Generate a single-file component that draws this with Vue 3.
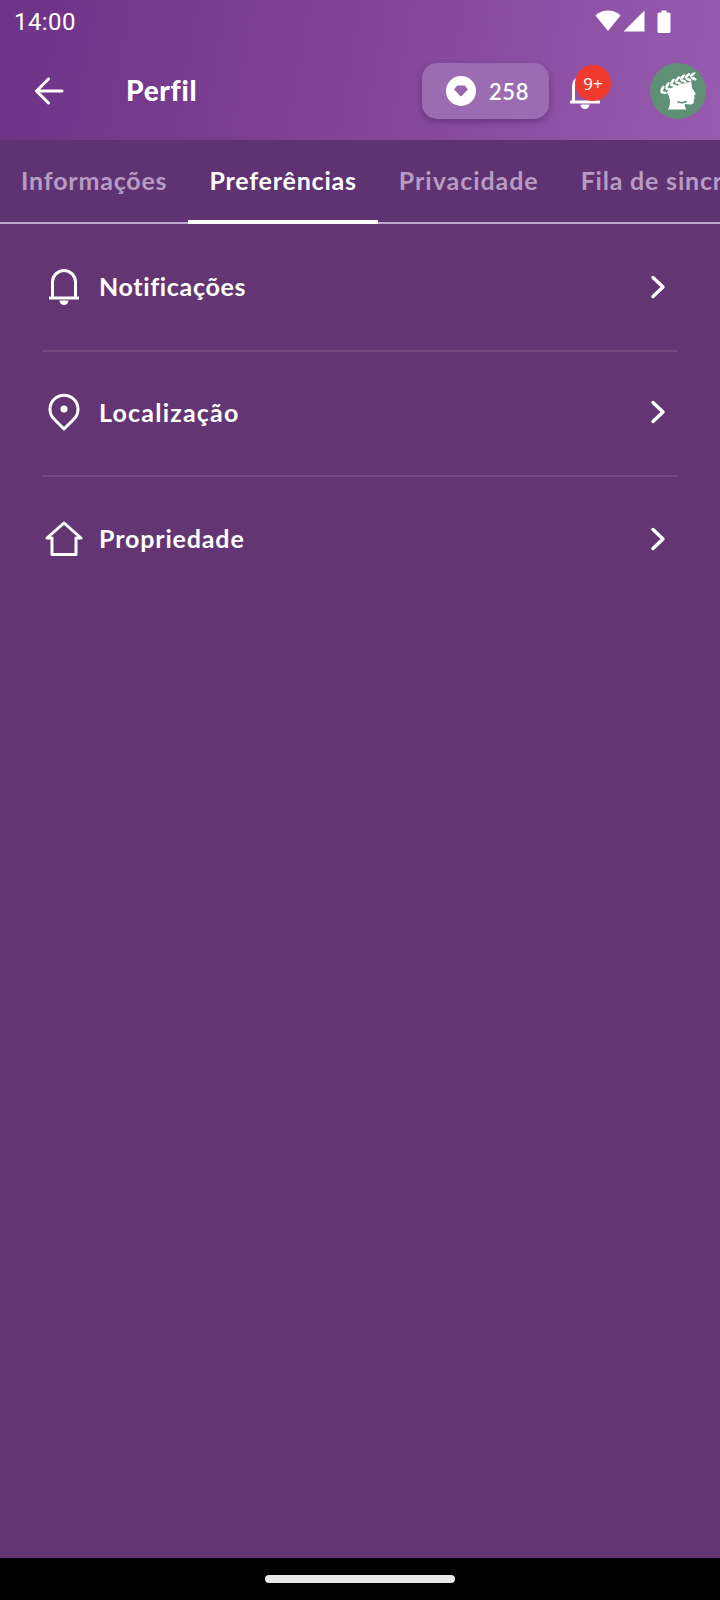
<script setup>
const tabs = [
  { label: 'Informações' },
  { label: 'Preferências', active: true },
  { label: 'Privacidade' },
  { label: 'Fila de sincronização' }
]
const rows = [
  { label: 'Notificações', icon: 'bell' },
  { label: 'Localização', icon: 'pin' },
  { label: 'Propriedade', icon: 'home' }
]
const spine = [
  [11, 28, -62, 12],
  [16, 24.5, -60, 12],
  [21, 21, -55, 14],
  [26, 18.5, -50, 16],
  [31, 16.5, -45, 20],
  [36, 15, -40, 24],
  [41, 14, -35, 28]
]
</script>

<template>
  <div class="screen">
    <header class="top">
      <div class="status">
        <span class="time">14:00</span>
        <div class="status-icons">
          <svg width="26" height="22" viewBox="0 0 26 22"><path d="M0.5 5.500C4 2.300 8.300 0.500 13 0.500s9 1.800 12.500 5L13 21z" fill="#fff"/></svg>
          <svg width="22" height="22" viewBox="0 0 22 22"><path d="M21.500 0.500V21.500H0.500z" fill="#fff"/></svg>
          <svg width="14" height="23" viewBox="0 0 14 23"><path d="M4.500 0.500h5v2h2.500a1.500 1.500 0 0 1 1.500 1.500v17.500a1.500 1.500 0 0 1-1.500 1.500h-10a1.500 1.500 0 0 1-1.500-1.500v-17.500a1.500 1.500 0 0 1 1.500-1.500h2.500z" fill="#fff"/></svg>
        </div>
      </div>
      <div class="toolbar">
        <svg class="back" width="30" height="28" viewBox="0 0 30 28" fill="none" stroke="#fff" stroke-width="3" stroke-linecap="round" stroke-linejoin="round"><path d="M28 14H3M14.500 2L2.500 14l12 12"/></svg>
        <h1 class="title">Perfil</h1>
        <div class="chip">
          <span class="gem">
            <svg width="14" height="12" viewBox="0 0 14 12"><path d="M3.500 0.500h7a1 1 0 0 1 .8.400l2.200 3a1 1 0 0 1-.1 1.200L7.700 11a1 1 0 0 1-1.400 0L.6 5.100a1 1 0 0 1-.1-1.200l2.200-3a1 1 0 0 1 .8-.400z" fill="#9767ad"/></svg>
          </span>
          <span class="chip-num">258</span>
        </div>
        <div class="bell-wrap">
          <svg width="30" height="37" viewBox="0 0 30 37" fill="none"><path d="M3.500 28.500V14a11.500 11.500 0 0 1 23 0v14.500" stroke="#fff" stroke-width="3"/><path d="M1 29h28" stroke="#fff" stroke-width="3" stroke-linecap="round"/><path d="M10.500 31.500h9a4.500 4.500 0 0 1-9 0z" fill="#fff"/></svg>
          <span class="badge">9+</span>
        </div>
        <div class="avatar">
          <svg width="56" height="56" viewBox="0 0 56 56">
            <path d="M24 18L38 14c2.500 1.500 3.500 4 3.500 7l.8 4.500 3.700 5.500-2 1.500.6 3-1 1 .3 2.500c-.5 2-2 2.500-4 2.500l-5-.5c-.5 2 .5 4 1.600 5.500H18c1.200-2.500 2.300-6 2-9-.3-3-2-6-3-8.500z" fill="#fff"/>
            <path d="M28 39c3 1 5.500 1 8-.5" stroke="#5f8f74" stroke-width="1.600" fill="none" stroke-linecap="round"/>
            <path d="M7 31C14 23 27 16.500 46 14" stroke="#5f8f74" stroke-width="8" fill="none"/>
            <g fill="#fff">
              <template v-for="(p, i) in spine" :key="i">
                <ellipse :cx="p[0] + 1.500" :cy="p[1] - 2.500" rx="3.400" ry="1.350" :transform="`rotate(${p[2]} ${p[0] + 1.500} ${p[1] - 2.500})`"/>
                <ellipse :cx="p[0] + 2.500" :cy="p[1] + 1.500" rx="3.400" ry="1.350" :transform="`rotate(${p[3]} ${p[0] + 2.500} ${p[1] + 1.500})`"/>
              </template>
            </g>
          </svg>
        </div>
      </div>
    </header>

    <nav class="tabs">
      <div v-for="t in tabs" :key="t.label" class="tab" :class="{ active: t.active }">{{ t.label }}</div>
    </nav>

    <main class="list">
      <div v-for="r in rows" :key="r.label" class="row">
        <span class="row-icon">
          <svg v-if="r.icon === 'bell'" width="30" height="38" viewBox="0 0 30 38" fill="none"><path d="M3.500 29.500V14a11.500 11.500 0 0 1 23 0v15.500" stroke="#fff" stroke-width="3"/><path d="M1 30h28" stroke="#fff" stroke-width="3" stroke-linecap="round"/><path d="M10.500 32.500h9a4.500 4.500 0 0 1-9 0z" fill="#fff"/></svg>
          <svg v-else-if="r.icon === 'pin'" width="32" height="38" viewBox="0 0 32 38" fill="none"><path d="M16 36L6 26A14 14 0 1 1 26 26z" stroke="#fff" stroke-width="3" stroke-linejoin="round"/><circle cx="16" cy="16" r="3.500" fill="#fff"/></svg>
          <svg v-else width="38" height="35" viewBox="0 0 38 35" fill="none"><path d="M7 33.500V17H2L19 2l17 15h-5v16.500z" stroke="#fff" stroke-width="3" stroke-linejoin="round"/></svg>
        </span>
        <span class="row-label">{{ r.label }}</span>
        <svg class="chev" width="16" height="24" viewBox="0 0 16 24" fill="none" stroke="#fff" stroke-width="3.400" stroke-linecap="round" stroke-linejoin="round"><path d="M3 2.500l10 9.500-10 9.500"/></svg>
      </div>
    </main>

    <footer class="navbar"><span class="pill"></span></footer>
  </div>
</template>

<style scoped>
.screen {
  width: 720px;
  height: 1600px;
  display: flex;
  flex-direction: column;
  background: #633673;
  font-family: "Lato", "Open Sans", sans-serif;
  color: #fff;
  overflow: hidden;
}
.top {
  height: 140px;
  flex: none;
  background: linear-gradient(100deg, #6d3386 0%, #7d4092 40%, #975bb0 100%);
}
.status {
  height: 44px;
  display: flex;
  align-items: center;
  justify-content: space-between;
  padding: 0 13px 0 14px;
}
.time {
  font-family: "Roboto", sans-serif;
  font-size: 24px;
  color: #fff;
  letter-spacing: 0.4px;
}
.status-icons {
  display: flex;
  align-items: center;
  gap: 2px;
  margin-right: 36px;
  padding-bottom: 2px;
}
.status-icons svg:last-child { margin-left: 10px; }
.toolbar {
  height: 94px;
  display: flex;
  align-items: center;
}
.back { margin-left: 34px; flex: none; }
.title {
  margin: 0 0 0 62px;
  padding-bottom: 2px;
  font-size: 28px;
  font-weight: 900;
  line-height: 32px;
  letter-spacing: 0.7px;
  width: 296px;
}
.chip {
  width: 127px;
  height: 56px;
  flex: none;
  display: flex;
  align-items: center;
  border-radius: 15px;
  background: #9b6cb1;
  box-shadow: 0 3px 6px rgba(50, 15, 70, 0.35);
}
.gem {
  width: 30px;
  height: 30px;
  margin-left: 24px;
  border-radius: 50%;
  background: #fff;
  display: flex;
  align-items: center;
  justify-content: center;
}
.chip-num {
  margin-left: 13px;
  font-size: 22px;
  font-weight: 600;
  letter-spacing: 0.6px;
}
.bell-wrap {
  position: relative;
  width: 30px;
  height: 37px;
  margin-left: 21px;
  flex: none;
}
.bell-wrap svg { display: block; }
.badge {
  position: absolute;
  left: 5px;
  top: -7.500px;
  width: 36px;
  height: 36px;
  border-radius: 50%;
  background: #f2392d;
  font-family: "Open Sans", sans-serif;
  font-size: 17px;
  display: flex;
  align-items: center;
  justify-content: center;
}
.avatar {
  width: 56px;
  height: 56px;
  flex: none;
  margin-left: 50px;
  border-radius: 50%;
  background: #5f8f74;
}
.avatar svg { display: block; }
.tabs {
  height: 84px;
  flex: none;
  display: flex;
  background: #5f3272;
  box-shadow: inset 0 -2px 0 #bfa8cb;
  overflow: hidden;
}
.tab {
  flex: none;
  padding: 0 21px 4px;
  height: 84px;
  box-sizing: border-box;
  display: flex;
  align-items: center;
  font-size: 25px;
  font-weight: 700;
  color: #b69cc3;
  white-space: nowrap;
  letter-spacing: 0.8px;
}
.tab:nth-child(3) { letter-spacing: 0.95px; }
.tab.active {
  color: #fff;
  border-bottom: 4px solid #fff;
  padding-bottom: 0;
}
.list {
  flex: 1;
  padding: 2px 42px 0;
}
.row {
  height: 125.500px;
  box-sizing: border-box;
  display: flex;
  align-items: center;
  padding-bottom: 2px;
  border-bottom: 2px solid #75497f;
}
.row:last-child { border-bottom: none; }
.row-icon {
  width: 42px;
  height: 42px;
  margin-left: 1px;
  flex: none;
  display: flex;
  align-items: center;
  justify-content: center;
}
.row-label {
  margin-left: 14px;
  padding-bottom: 2px;
  font-size: 25px;
  font-weight: 700;
  letter-spacing: 0.65px;
}
.row:nth-child(2) .row-label { letter-spacing: 1.2px; padding-bottom: 0; }
.row:nth-child(3) .row-label { letter-spacing: 0.85px; }
.chev { margin-left: auto; margin-right: 12px; }
.navbar {
  height: 42px;
  flex: none;
  background: #000;
  display: flex;
  justify-content: center;
  align-items: flex-start;
  padding-top: 17px;
  box-sizing: border-box;
}
.pill {
  width: 190px;
  height: 8px;
  border-radius: 4px;
  background: #e8e8e8;
}
</style>
